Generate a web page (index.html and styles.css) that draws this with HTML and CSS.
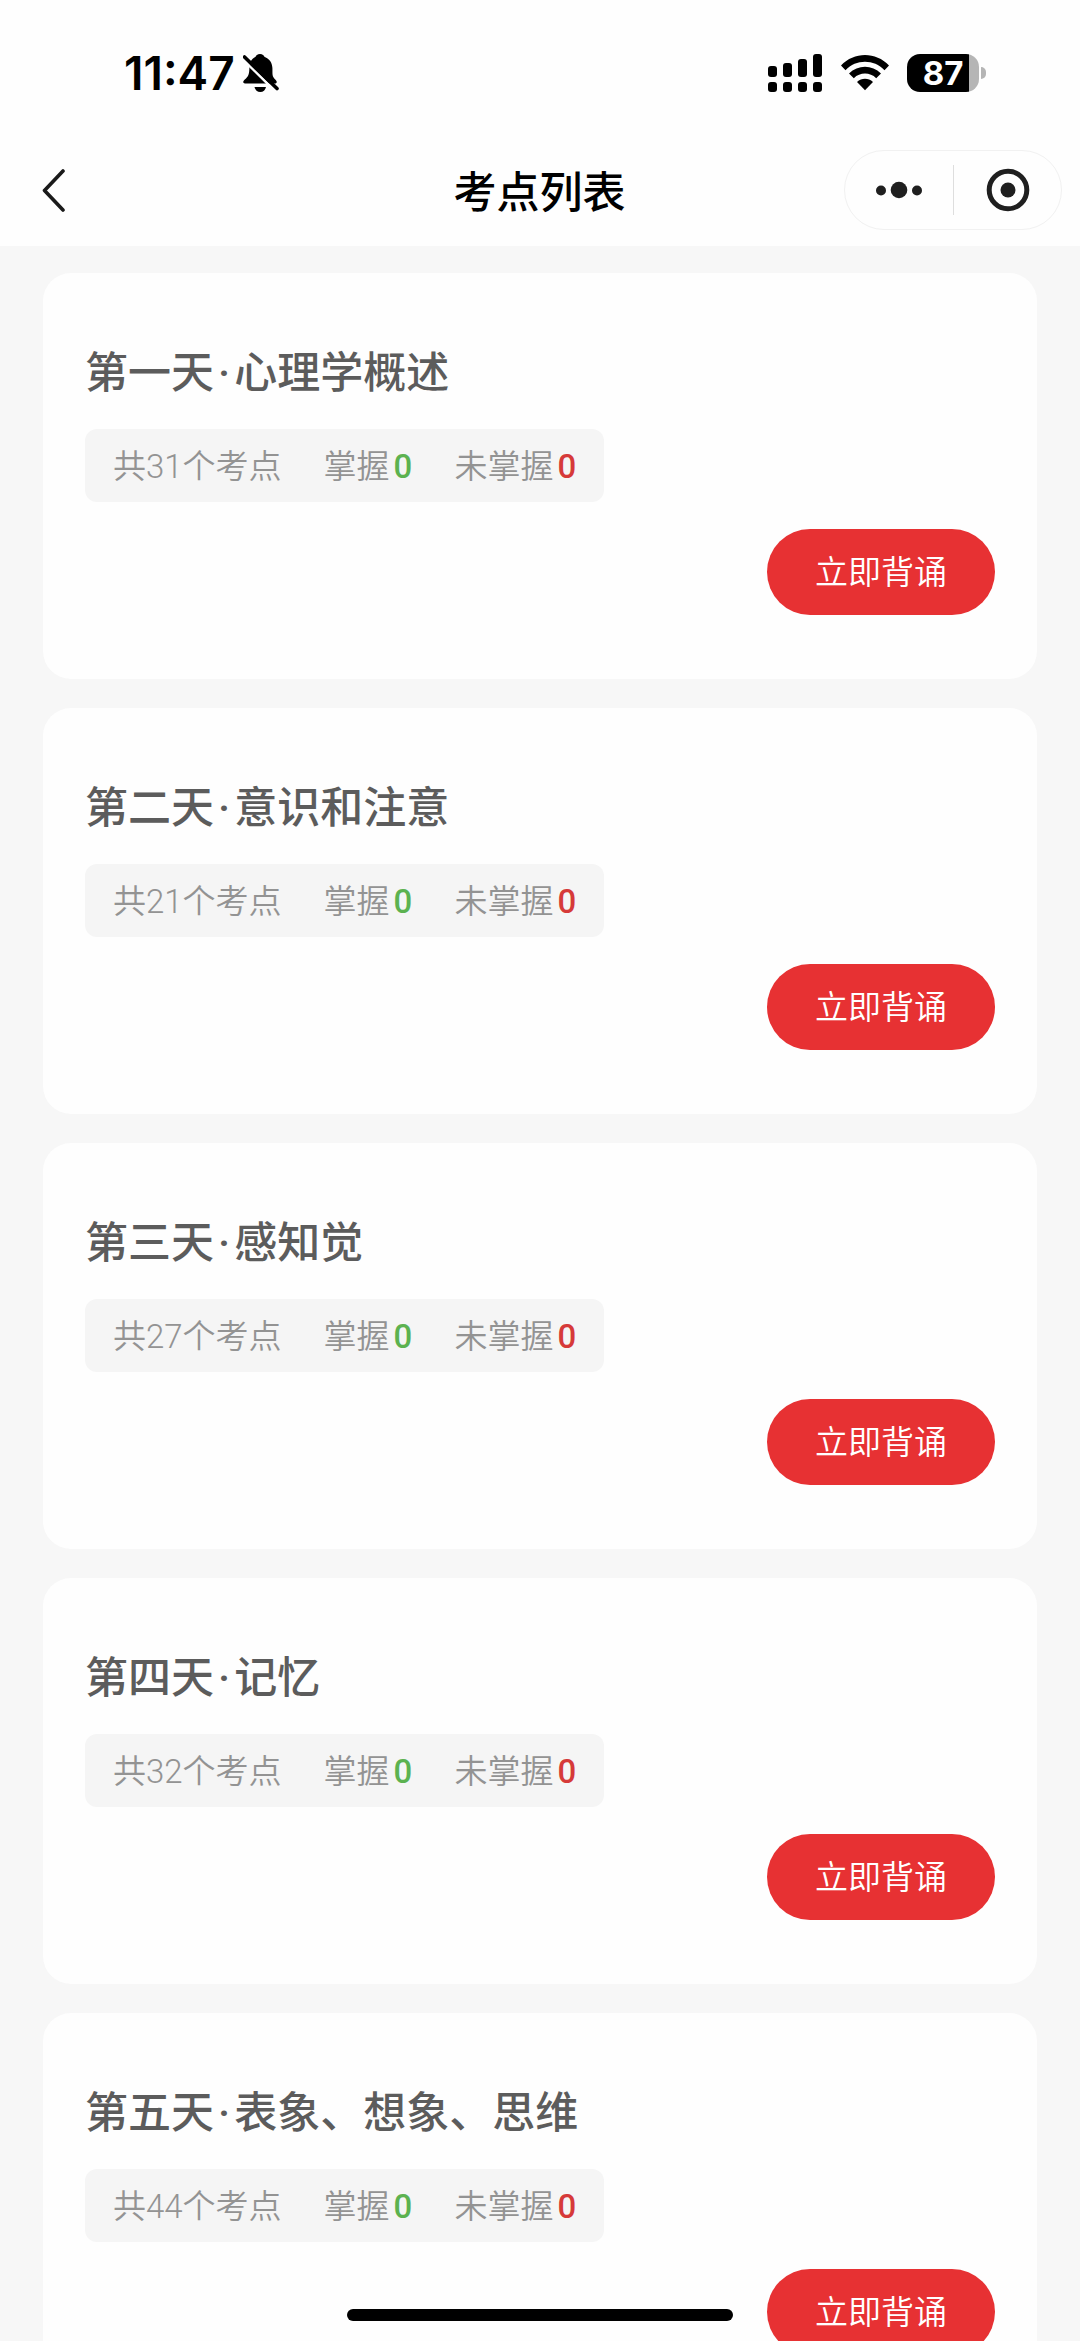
FILE: index.html
```html
<!DOCTYPE html>
<html lang="zh-CN">
<head>
    <meta charset="UTF-8">
    <meta name="viewport" content="width=device-width, initial-scale=1.0">
    <title>考点列表</title>
    <link rel="stylesheet" href="styles.css">
</head>
<body>
    <div class="status-bar">
        <div class="status-left">
            <span class="time">11:47</span>
            <svg class="bell" width="36" height="38" viewBox="0 0 36 38">
                <path d="M17 0c-2.600 0-4 1.500-4.400 2.800C8 5 6.500 9 6.400 14c-.1 6-1 8.500-4.600 11.500C-.6 27.600 0 29.500 2 29.500h30c2 0 2.500-2 .5-3.800C28.800 22.500 29.600 20 29.400 14c-.2-5-2.600-9-8-11.200C21 1.500 19.600 0 17 0z"/>
                <path d="M11.500 33h11.500c-.6 3-2.800 5-5.700 5s-5.200-2-5.800-5z"/>
                <path d="M0 5.500L31 36" stroke="#fefefe" stroke-width="2.500"/>
                <path d="M1.500 3l32.500 31.500" stroke="#000" stroke-width="3.600" stroke-linecap="round"/>
            </svg>
        </div>
        <div class="status-right">
            <svg width="55" height="38" viewBox="0 0 55 38">
                <rect x="0" y="12" width="9" height="11" rx="3"/>
                <rect x="15" y="9" width="9" height="14" rx="3"/>
                <rect x="30" y="5" width="9" height="18" rx="3"/>
                <rect x="45" y="0" width="9" height="23" rx="3"/>
                <rect x="0" y="28" width="9" height="10" rx="3"/>
                <rect x="15" y="28" width="9" height="10" rx="3"/>
                <rect x="30" y="28" width="9" height="10" rx="3"/>
                <rect x="45" y="28" width="9" height="10" rx="3"/>
            </svg>
            <svg class="wifi" width="48" height="36" viewBox="0 0 48 36">
                <path d="M0 10.500C13-3.500 35-3.500 48 10.500l-4.500 4.700C33 4 15 4 4.500 15.200z"/>
                <path d="M8 18.500c9-9 23-9 32 0l-4.800 4.700c-6.200-6.200-16.200-6.200-22.400 0z"/>
                <path d="M16 27c4.600-4.200 11.400-4.200 16 0l-8 8.300z"/>
            </svg>
            <div class="battery"><span>87</span></div>
        </div>
    </div>

    <header class="nav">
        <button class="back" type="button" aria-label="返回">
            <svg width="24" height="44" viewBox="0 0 24 44">
                <path d="M22 3L3.500 22.500 22 42" fill="none" stroke="#1a1a1a" stroke-width="3.600" stroke-linecap="round" stroke-linejoin="round"/>
            </svg>
        </button>
        <h1>考点列表</h1>
        <div class="capsule">
            <button type="button" aria-label="更多">
                <svg width="48" height="18" viewBox="0 0 48 18">
                    <circle cx="6" cy="9.500" r="5"/>
                    <circle cx="24" cy="9" r="8.300"/>
                    <circle cx="42" cy="9.500" r="5"/>
                </svg>
            </button>
            <button type="button" aria-label="关闭">
                <svg width="44" height="44" viewBox="0 0 44 44">
                    <circle cx="22" cy="22" r="18.800" fill="none" stroke="#1f1f1f" stroke-width="5"/>
                    <circle cx="22" cy="22" r="7.500"/>
                </svg>
            </button>
        </div>
    </header>

    <main class="list">
        <section class="card">
            <h2>第一天<span class="dot">·</span>心理学概述</h2>
            <div class="stats">
                <span>共31个考点</span>
                <span>掌握<b class="ok">0</b></span>
                <span>未掌握<b class="no">0</b></span>
            </div>
            <button class="recite" type="button">立即背诵</button>
        </section>
        <section class="card">
            <h2>第二天<span class="dot">·</span>意识和注意</h2>
            <div class="stats">
                <span>共21个考点</span>
                <span>掌握<b class="ok">0</b></span>
                <span>未掌握<b class="no">0</b></span>
            </div>
            <button class="recite" type="button">立即背诵</button>
        </section>
        <section class="card">
            <h2>第三天<span class="dot">·</span>感知觉</h2>
            <div class="stats">
                <span>共27个考点</span>
                <span>掌握<b class="ok">0</b></span>
                <span>未掌握<b class="no">0</b></span>
            </div>
            <button class="recite" type="button">立即背诵</button>
        </section>
        <section class="card">
            <h2>第四天<span class="dot">·</span>记忆</h2>
            <div class="stats">
                <span>共32个考点</span>
                <span>掌握<b class="ok">0</b></span>
                <span>未掌握<b class="no">0</b></span>
            </div>
            <button class="recite" type="button">立即背诵</button>
        </section>
        <section class="card">
            <h2>第五天<span class="dot">·</span>表象、想象、思维</h2>
            <div class="stats">
                <span>共44个考点</span>
                <span>掌握<b class="ok">0</b></span>
                <span>未掌握<b class="no">0</b></span>
            </div>
            <button class="recite" type="button">立即背诵</button>
        </section>
    </main>

    <div class="home-bar"></div>
</body>
</html>
```
FILE: styles.css
```css
*{
    box-sizing: border-box;
}

body{
    margin: 0;
    height: 100vh;
    display: flex;
    flex-direction: column;
    overflow: hidden;
    background-color: #f7f7f7;
    font-family: Roboto, "Noto Sans CJK SC", sans-serif;
}

button{
    border: 0;
    padding: 0;
    background: none;
    font-family: inherit;
    cursor: pointer;
}

svg{
    display: block;
}

/* barra de estado */
.status-bar{
    flex: none;
    height: 134px;
    padding: 12px 101px 0 124px;
    display: flex;
    align-items: center;
    justify-content: space-between;
    background-color: #fefefe;
    font-family: Inter, sans-serif;
}

.status-left,
.status-right{
    display: flex;
    align-items: center;
}

.time{
    font-size: 46px;
    font-weight: 600;
    line-height: 48px;
}

.bell{
    margin-left: 8px;
}

.wifi{
    margin: 0 18px;
}

.battery{
    position: relative;
    width: 72px;
    height: 38px;
    border-radius: 13px;
    background: linear-gradient(to right, #000 62px, #b5b5b5 62px);
    color: #fff;
    font-size: 33px;
    font-weight: 700;
    line-height: 38px;
    text-align: center;
}

.battery::after{
    content: "";
    position: absolute;
    left: 100%;
    top: 13px;
    width: 5px;
    height: 12px;
    margin-left: 2px;
    border-radius: 0 6px 6px 0;
    background-color: #b5b5b5;
}

/* cabecera */
.nav{
    flex: none;
    height: 112px;
    padding: 0 18px 0 41px;
    display: grid;
    grid-template-columns: 1fr auto 1fr;
    align-items: center;
    background-color: #fefefe;
}

.nav h1{
    margin: 0;
    padding: 5px 24px 0 0;
    font-size: 43px;
    font-weight: 500;
    line-height: 60px;
    color: #000;
}

.back{
    justify-self: start;
}

.capsule{
    justify-self: end;
    width: 218px;
    height: 80px;
    display: flex;
    border: 1px solid #f1f1f1;
    border-radius: 40px;
    fill: #1f1f1f;
}

.capsule button{
    flex: 1;
    display: flex;
    align-items: center;
    justify-content: center;
}

.capsule button + button{
    justify-content: flex-start;
}

.capsule button + button::before{
    content: "";
    width: 1px;
    height: 50px;
    margin-right: 32px;
    background-color: #dedede;
}

/* lista */
.list{
    flex: 1;
    min-height: 0;
    padding: 27px 43px;
    overflow-y: auto;
    scrollbar-width: none;
}

.card{
    margin-bottom: 29px;
    padding: 70px 42px 64px;
    display: flex;
    flex-direction: column;
    align-items: flex-start;
    border-radius: 28px;
    background-color: #fefefe;
}

.card h2{
    margin: 0 0 26px;
    font-size: 43px;
    font-weight: 500;
    line-height: 60px;
    color: #5c5c5c;
}

.dot{
    padding: 0 4px;
}

.stats{
    height: 73px;
    padding: 2px 28px 0;
    display: flex;
    align-items: center;
    gap: 42px;
    border-radius: 12px;
    background-color: #f5f5f5;
    color: #939393;
    font-size: 33px;
    font-weight: 350;
    line-height: 46px;
}

.stats b{
    margin-left: 4px;
    font-weight: 500;
}

.ok{
    color: #5cb250;
}

.no{
    color: #d63a39;
}

.recite{
    align-self: flex-end;
    height: 86px;
    margin-top: 27px;
    padding: 2px 48px 0;
    border-radius: 43px;
    background-color: #e73133;
    color: #fff;
    font-size: 33px;
    font-weight: 350;
    line-height: 46px;
}

.home-bar{
    position: fixed;
    left: 50%;
    bottom: 20px;
    width: 386px;
    height: 12px;
    transform: translateX(-50%);
    border-radius: 6px;
    background-color: #000;
}
```
